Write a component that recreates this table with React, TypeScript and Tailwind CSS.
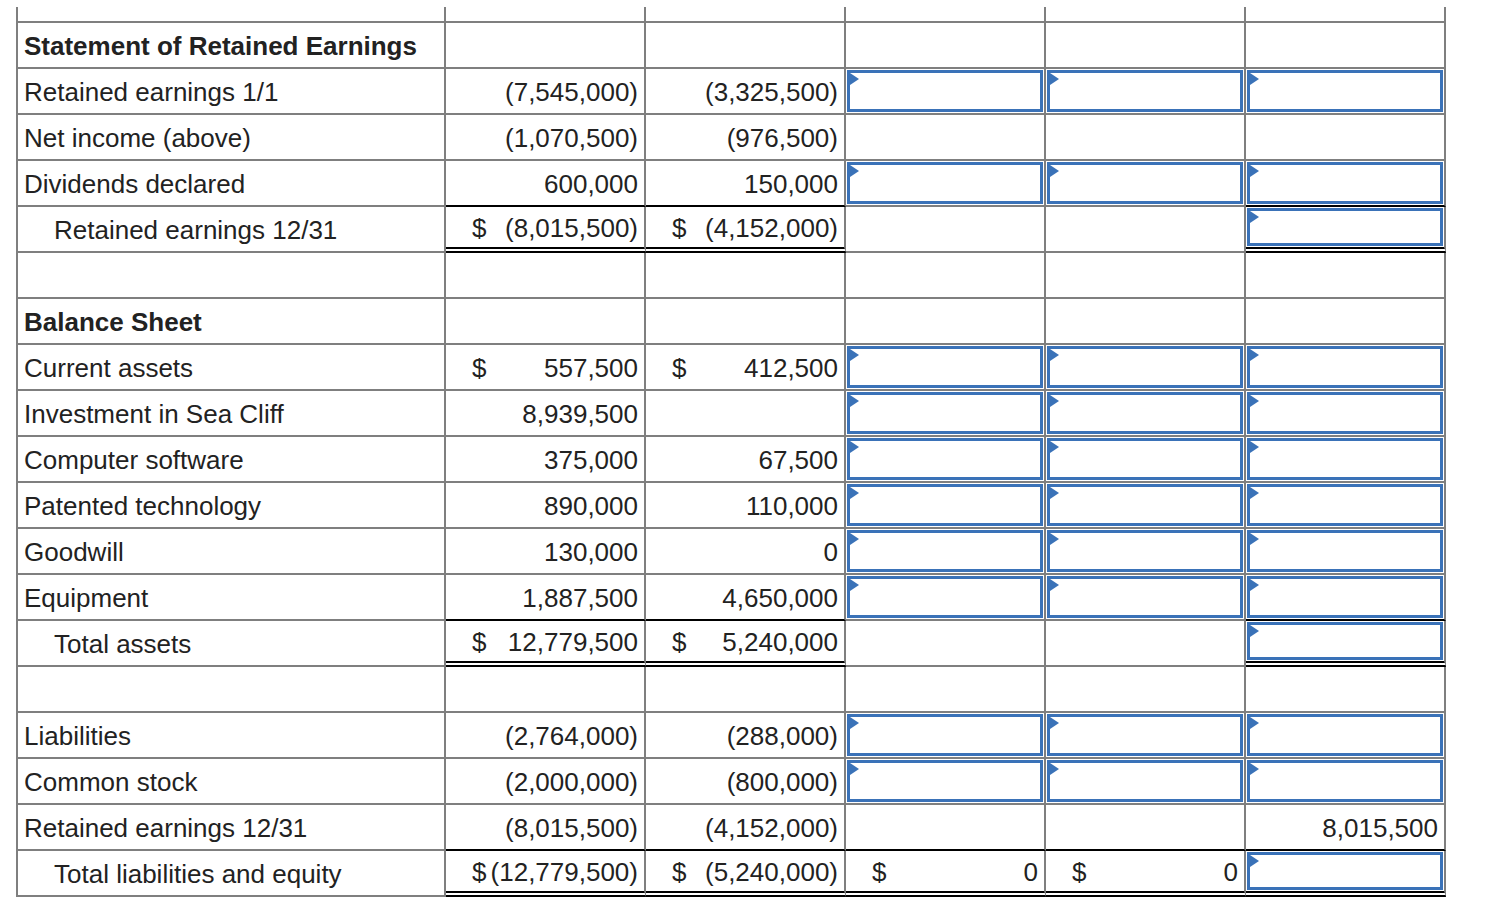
import React from "react";

type Cell =
  | { k: "num"; v: string; dollar?: boolean }
  | { k: "input" }
  | { k: "blank" };

type Row = {
  label: string;
  bold?: boolean;
  indent?: boolean;
  cells: Cell[];
  totals?: number[];
};

const B: Cell = { k: "blank" };
const I: Cell = { k: "input" };
const n = (v: string, dollar?: boolean): Cell => ({ k: "num", v, dollar });

const rows: Row[] = [
  { label: "Statement of Retained Earnings", bold: true, cells: [B, B, B, B, B] },
  { label: "Retained earnings 1/1", cells: [n("(7,545,000)"), n("(3,325,500)"), I, I, I] },
  { label: "Net income (above)", cells: [n("(1,070,500)"), n("(976,500)"), B, B, B] },
  { label: "Dividends declared", cells: [n("600,000"), n("150,000"), I, I, I] },
  {
    label: "Retained earnings 12/31",
    indent: true,
    cells: [n("(8,015,500)", true), n("(4,152,000)", true), B, B, I],
    totals: [0, 1, 4],
  },
  { label: "", cells: [B, B, B, B, B] },
  { label: "Balance Sheet", bold: true, cells: [B, B, B, B, B] },
  { label: "Current assets", cells: [n("557,500", true), n("412,500", true), I, I, I] },
  { label: "Investment in Sea Cliff", cells: [n("8,939,500"), B, I, I, I] },
  { label: "Computer software", cells: [n("375,000"), n("67,500"), I, I, I] },
  { label: "Patented technology", cells: [n("890,000"), n("110,000"), I, I, I] },
  { label: "Goodwill", cells: [n("130,000"), n("0"), I, I, I] },
  { label: "Equipment", cells: [n("1,887,500"), n("4,650,000"), I, I, I] },
  {
    label: "Total assets",
    indent: true,
    cells: [n("12,779,500", true), n("5,240,000", true), B, B, I],
    totals: [0, 1, 4],
  },
  { label: "", cells: [B, B, B, B, B] },
  { label: "Liabilities", cells: [n("(2,764,000)"), n("(288,000)"), I, I, I] },
  { label: "Common stock", cells: [n("(2,000,000)"), n("(800,000)"), I, I, I] },
  { label: "Retained earnings 12/31", cells: [n("(8,015,500)"), n("(4,152,000)"), B, B, n("8,015,500")] },
  {
    label: "Total liabilities and equity",
    indent: true,
    cells: [n("(12,779,500)", true), n("(5,240,000)", true), n("0", true), n("0", true), I],
    totals: [0, 1, 2, 3, 4],
  },
];

function bottomClass(ri: number, ci: number) {
  if (rows[ri].totals?.includes(ci)) return "border-b-[6px] border-double border-b-black";
  if (rows[ri + 1]?.totals?.includes(ci)) return "border-b-2 border-b-black";
  return "border-b-2 border-b-[#7f7f7f]";
}

function InputBox() {
  return (
    <div className="h-full w-full p-px">
      <div className="relative h-full w-full border-[3px] border-[#3a72b8] bg-white">
        {/* flag marker in the top-left corner */}
        <svg
          width="12"
          height="16"
          viewBox="0 0 12 16"
          className="absolute -left-[3px] -top-[2px] h-[16px] w-[12px] overflow-visible"
        >
          <polygon points="0,0 12,8 0,16" fill="#3a72b8" />
        </svg>
      </div>
    </div>
  );
}

function ValueCell({ cell }: { cell: Cell }) {
  if (cell.k === "input") return <InputBox />;
  if (cell.k === "blank") return null;
  return (
    <div className="flex h-full items-center justify-between pl-[26px] pr-[6px] pt-[2px]">
      <span>{cell.dollar ? "$" : ""}</span>
      <span>{cell.v}</span>
    </div>
  );
}

export default function App() {
  return (
    <div className="min-h-screen bg-white font-['Liberation_Sans',Arial,sans-serif] text-[26px] leading-none text-[#222]">
      <div className="ml-[16px] mt-[7px] w-fit border-l-2 border-[#7f7f7f]">
        {/* partial row cut at the top */}
        <div className="flex h-[16px]">
          <div className="w-[428px] border-b-2 border-r-2 border-[#7f7f7f]" />
          {[0, 1, 2, 3, 4].map((i) => (
            <div key={i} className="w-[200px] border-b-2 border-r-2 border-[#7f7f7f]" />
          ))}
        </div>

        {rows.map((row, ri) => (
          <div key={ri} className="flex h-[46px]">
            <div
              className={`flex w-[428px] items-center border-b-2 border-r-2 border-[#7f7f7f] pt-[2px] ${
                row.indent ? "pl-[36px]" : "pl-[6px]"
              } ${row.bold ? "font-bold" : ""}`}
            >
              {row.label}
            </div>
            {row.cells.map((cell, ci) => (
              <div
                key={ci}
                className={`w-[200px] border-r-2 border-r-[#7f7f7f] ${bottomClass(ri, ci)}`}
              >
                <ValueCell cell={cell} />
              </div>
            ))}
          </div>
        ))}
      </div>
    </div>
  );
}
